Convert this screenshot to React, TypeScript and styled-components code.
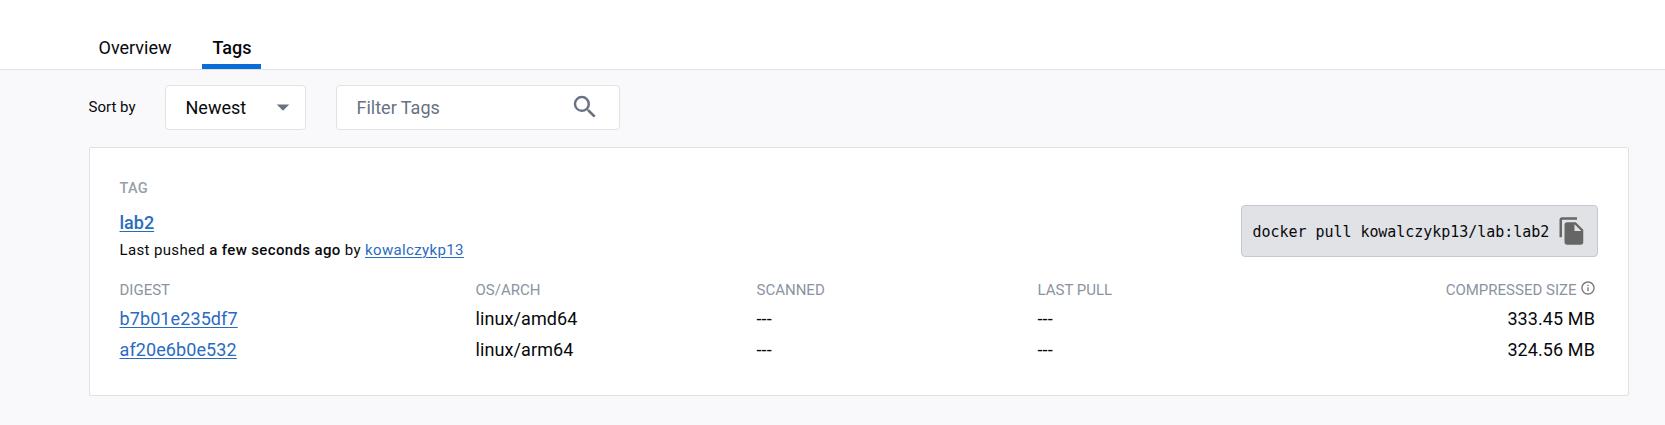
import React from "react";
import styled, { createGlobalStyle } from "styled-components";
import { MdArrowDropDown, MdFileCopy, MdInfoOutline, MdSearch } from "react-icons/md";

const Global = createGlobalStyle`
  * { box-sizing: border-box; }
  body { margin: 0; background: #f9f9fb; font-family: Roboto, sans-serif; color: #08090c; }
  svg { flex: none; display: block; }
`;
const Page = styled.div`height: 425px; overflow: hidden; background: #f9f9fb;`;
const Tabs = styled.nav`height: 70px; background: #fff; border-bottom: 1px solid #dfe1e5; display: flex; align-items: flex-end; padding-left: 88px; gap: 20px;`;
const Tab = styled.a<{ $active?: boolean }>`
  height: 41px; padding: 9px 10px 0 10.5px; font-size: 18px; line-height: 21px;
  font-weight: ${(p) => (p.$active ? 500 : 400)};
  border-bottom: 5px solid ${(p) => (p.$active ? "#086dd7" : "transparent")};
`;
const ActiveTab = styled(Tab)`margin-left: 0.5px; padding: 9px 9.5px 0 10.5px;`;
const Main = styled.main`padding: 15px 36px 0 89px;`;
const Toolbar = styled.div`display: flex; align-items: center; height: 45px;`;
const SortLabel = styled.span`font-size: 15px; width: 76.5px; margin-left: -0.5px; line-height: 20px; padding-bottom: 2px;`;
const Field = styled.div<{ $width: number; $muted?: boolean; $end: number }>`
  width: ${(p) => p.$width}px; height: 45px; background: #fff; border: 1px solid #e1e2e6; border-radius: 4px;
  display: flex; align-items: center; justify-content: space-between; padding: 0 ${(p) => p.$end}px 0 19.5px; margin-right: 30px;
  font-size: 18px; color: ${(p) => (p.$muted ? "#677285" : "inherit")};
  svg { color: #677285; margin-bottom: 2px; }
`;
const Card = styled.section`
  margin-top: 17px; height: 249px; background: #fff; border: 1px solid #dfe1e5; border-radius: 2px; padding: 31px 30px 0 29.5px;
`;
const Head = styled.div`display: flex; justify-content: space-between; height: 101px;`;
const TagTitle = styled.div`font-size: 14.5px; line-height: 20px; font-weight: 500; letter-spacing: 0.3px; color: #98a0a8;`;
const Link = styled.a`color: #2a6bc2; text-decoration: underline; text-decoration-thickness: 1px; text-underline-offset: 2px;`;
const TagName = styled.div`font-size: 18px; font-weight: 500; line-height: 24px; margin-top: 12px;`;
const Pushed = styled.div`font-size: 15px; line-height: 20px; margin-top: 5px; letter-spacing: 0.36px; b { font-weight: 500; }`;
const Command = styled.div`
  margin-top: 26px; width: 357px; height: 52px; background: #e1e2e6; border: 1px solid #c4c8d1; border-radius: 4px;
  display: flex; align-items: center; justify-content: space-between; padding: 0 10px 0 10.5px;
  font: 15px "DejaVu Sans Mono", monospace; letter-spacing: -0.04px;
  svg { color: #666; }
`;
const CommandText = styled.span`padding-top: 2px;`;
const Grid = styled.div`display: grid; grid-template-columns: 356px 281px 281px 281px 1fr; padding-right: 3px;`;
const Heading = styled.div<{ $end?: boolean }>`
  font-size: 15px; line-height: 20px; height: 23px; color: #8b93a2; display: flex; gap: 3.5px; justify-content: ${(p) => (p.$end ? "flex-end" : "flex-start")};
  svg { color: #777; margin-right: -1px; }
`;
const Cell = styled.div<{ $end?: boolean }>`
  font-size: 18px; line-height: 31px; letter-spacing: 0.1px; text-align: ${(p) => (p.$end ? "right" : "left")};
`;

const headings = ["DIGEST", "OS/ARCH", "SCANNED", "LAST PULL"];
const images = [
  ["b7b01e235df7", "linux/amd64", "---", "---", "333.45 MB"],
  ["af20e6b0e532", "linux/arm64", "---", "---", "324.56 MB"],
];

export default function App() {
  return (
    <Page>
      <Global />
      <Tabs>
        <Tab>Overview</Tab>
        <ActiveTab $active>Tags</ActiveTab>
      </Tabs>
      <Main>
        <Toolbar>
          <SortLabel>Sort by</SortLabel>
          <Field $width={141} $end={7}>Newest<MdArrowDropDown size={30} /></Field>
          <Field $width={284} $end={19} $muted>Filter Tags<MdSearch size={30} /></Field>
        </Toolbar>
        <Card>
          <Head>
            <div>
              <TagTitle>TAG</TagTitle>
              <TagName><Link>lab2</Link></TagName>
              <Pushed>Last pushed <b>a few seconds ago</b> by <Link>kowalczykp13</Link></Pushed>
            </div>
            <Command><CommandText>docker pull kowalczykp13/lab:lab2</CommandText><MdFileCopy size={30} /></Command>
          </Head>
          <Grid>
            {headings.map((h) => <Heading key={h}>{h}</Heading>)}
            <Heading $end>COMPRESSED SIZE<MdInfoOutline size={16} /></Heading>
            {images.map((row) => row.map((value, i) => (
              <Cell key={`${row[0]}-${i}`} $end={i === 4}>{i === 0 ? <Link>{value}</Link> : value}</Cell>
            )))}
          </Grid>
        </Card>
      </Main>
    </Page>
  );
}
